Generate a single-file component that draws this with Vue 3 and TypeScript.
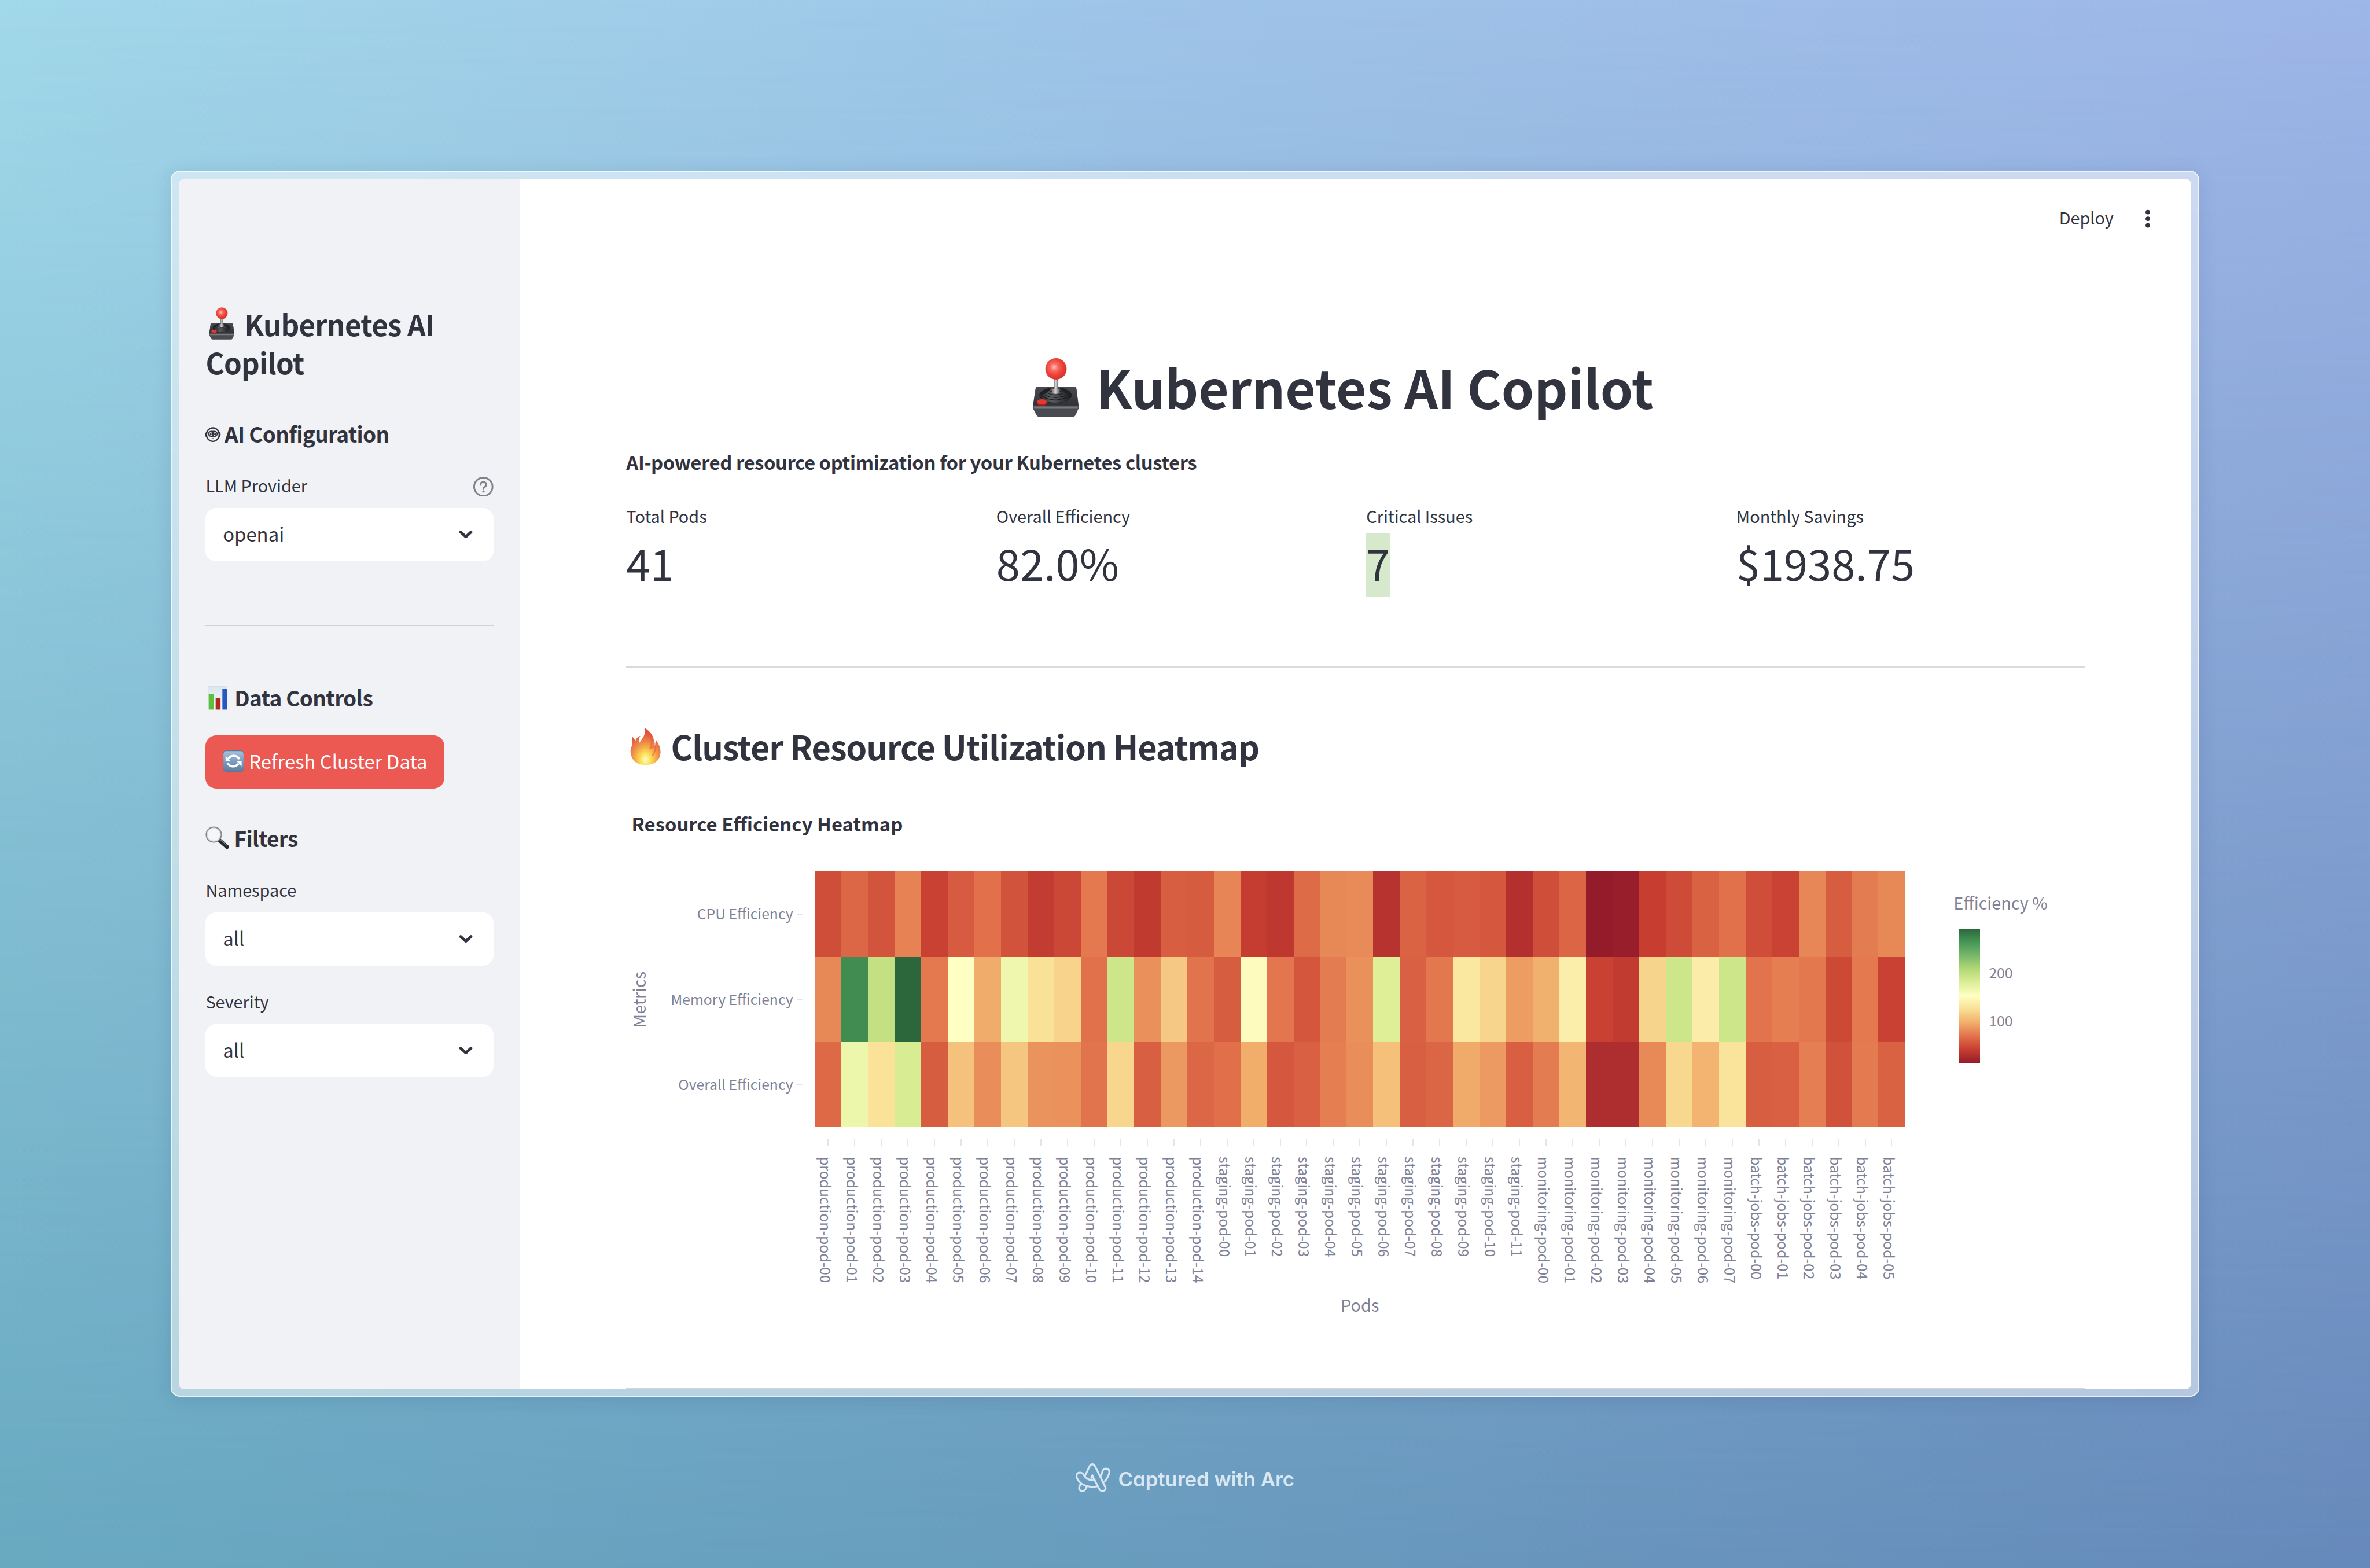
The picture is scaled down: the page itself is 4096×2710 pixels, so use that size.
<script setup lang="ts">
interface Metric {
  label: string
  value: string
  selected?: boolean
}

const metrics: Metric[] = [
  { label: 'Total Pods', value: '41' },
  { label: 'Overall Efficiency', value: '82.0%' },
  { label: 'Critical Issues', value: '7', selected: true },
  { label: 'Monthly Savings', value: '$1938.75' },
]

const filters = [
  { label: 'Namespace', value: 'all' },
  { label: 'Severity', value: 'all' },
]

// Diverging red-yellow-green ramp, eleven evenly spaced stops.
const ramp: number[][] = [
  [148, 28, 42], [199, 62, 49], [226, 115, 76], [241, 175, 108], [249, 223, 149], [254, 255, 194],
  [220, 238, 150], [178, 216, 117], [120, 184, 106], [70, 150, 86], [43, 103, 59],
]

function shade(level: number): string {
  const i = Math.min(Math.floor(level), ramp.length - 2)
  const f = level - i
  const c = ramp[i].map((v, k) => Math.round(v + (ramp[i + 1][k] - v) * f))
  return `rgb(${c.join(',')})`
}

// Efficiency levels per pod, on the ramp's 0-10 scale.
const rows = [
  {
    name: 'CPU Efficiency',
    levels: [
      1.3, 1.77, 1.42, 2.25, 1.05, 1.55, 1.95, 1.4, 0.93, 1.18, 2.1, 1.18, 0.87, 1.6, 1.57, 2.3, 0.97, 0.83, 1.85,
      2.35, 2.4, 0.67, 1.7, 1.47, 1.55, 1.47, 0.6, 1.3, 1.74, 0, 0.06, 1, 1.25, 1.68, 1.97, 1.28, 1.07, 2.32, 1.58,
      2.15, 2.35,
    ],
  },
  {
    name: 'Memory Efficiency',
    levels: [
      2.35, 9.2, 6.6, 10, 2.1, 5, 2.95, 5.45, 4.05, 3.75, 1.97, 6.35, 2.48, 3.55, 2.02, 1.58, 4.88, 2.05, 1.45, 2.15,
      2.48, 5.95, 1.65, 2.08, 4.25, 3.8, 2.7, 3.05, 4.48, 1.05, 0.9, 3.78, 6.38, 4.45, 6.38, 2, 2.2, 2.07, 1.2, 2.1,
      1.05,
    ],
  },
  {
    name: 'Overall Efficiency',
    levels: [
      1.82, 5.5, 4.1, 6.1, 1.58, 3.4, 2.45, 3.48, 2.53, 2.5, 2.02, 3.82, 1.63, 2.63, 1.78, 1.92, 2.98, 1.47, 1.65,
      2.2, 2.45, 3.35, 1.63, 1.75, 2.93, 2.65, 1.63, 2.15, 3.15, 0.5, 0.5, 2.38, 3.85, 3.1, 4.15, 1.6, 1.65, 2.18,
      1.37, 2.13, 1.67,
    ],
  },
]

function series(prefix: string, count: number): string[] {
  return Array.from({ length: count }, (_, i) => `${prefix}-pod-${String(i).padStart(2, '0')}`)
}

const pods = [
  ...series('production', 15),
  ...series('staging', 12),
  ...series('monitoring', 8),
  ...series('batch-jobs', 6),
]
</script>

<template>
  <div class="stage">
    <svg class="defs" aria-hidden="true">
      <defs>
        <radialGradient id="ball" cx=".42" cy=".42" r=".6">
          <stop offset="0" stop-color="#ffc3bb" />
          <stop offset=".3" stop-color="#f76a60" />
          <stop offset=".65" stop-color="#ec3f37" />
          <stop offset="1" stop-color="#d6332d" />
        </radialGradient>
        <linearGradient id="stick">
          <stop offset="0" stop-color="#6a6a6c" />
          <stop offset=".45" stop-color="#d6d6d6" />
          <stop offset="1" stop-color="#5c5c5e" />
        </linearGradient>
        <linearGradient id="boot">
          <stop offset="0" stop-color="#262729" />
          <stop offset=".35" stop-color="#5b5d61" />
          <stop offset="1" stop-color="#1c1d1f" />
        </linearGradient>
        <linearGradient id="deck" x2="0" y2="1">
          <stop offset="0" stop-color="#4a4c51" />
          <stop offset="1" stop-color="#303236" />
        </linearGradient>
        <radialGradient id="flame" cx=".5" cy=".85" r=".8">
          <stop offset="0" stop-color="#fffbd8" />
          <stop offset=".18" stop-color="#fde75e" />
          <stop offset=".38" stop-color="#f8b84a" />
          <stop offset=".6" stop-color="#ec8648" />
          <stop offset=".9" stop-color="#e2503a" />
        </radialGradient>
        <linearGradient id="tile" x2="0" y2="1">
          <stop offset="0" stop-color="#a9c0dc" />
          <stop offset=".5" stop-color="#7e9dc2" />
          <stop offset="1" stop-color="#5d7b9f" />
        </linearGradient>
        <linearGradient id="sheet" x2="0" y2="1">
          <stop offset="0" stop-color="#dbe4ee" />
          <stop offset="1" stop-color="#f6f8fb" />
        </linearGradient>
        <symbol id="joystick" viewBox="0 0 100 127">
          <path d="M13 61H89Q94 61 95 66L100 103V108L93 123Q91 126.500 87 126.500H15Q11 126.500 9 123L1 108V103L7 66Q8 61 13 61Z" fill="#494b50" />
          <path d="M13 61H89Q94 61 95 66L99 102H2L7 66Q8 61 13 61Z" fill="url(#deck)" />
          <path d="M3 104H98V109H4Z" fill="#777a7f" />
          <ellipse cx="50" cy="80" rx="35" ry="17" fill="#202124" />
          <path d="M17 81Q34 76 42 64H59Q66 76 84 81Q80 95 50 96Q21 95 17 81Z" fill="url(#boot)" />
          <g fill="none" stroke="#17181a" stroke-width="1.300">
            <path d="M38 71Q50 77 63 71" />
            <path d="M32 75Q50 84 69 75" />
            <path d="M26 79Q50 91 75 79" />
            <path d="M20 82Q50 98 80 82" />
          </g>
          <rect x="46" y="43" width="10" height="27" fill="url(#stick)" />
          <path d="M42 68Q50 64 59 68V75Q50 79 42 75Z" fill="url(#stick)" />
          <circle cx="51" cy="23" r="23" fill="url(#ball)" />
          <ellipse cx="20.500" cy="97" rx="10.500" ry="6" fill="#a81f1b" />
          <ellipse cx="20.500" cy="94" rx="10.500" ry="5.500" fill="#e53a33" />
        </symbol>
        <symbol id="chevron" viewBox="0 0 30 20">
          <path d="M4 4.500L15 14.500L26 4.500" fill="none" stroke="#31333f" stroke-width="6" stroke-linecap="round" stroke-linejoin="round" />
        </symbol>
      </defs>
    </svg>

    <div class="frame">
      <div class="window">
        <aside class="sidebar">
          <h2 class="brand">
            <svg class="joy-small"><use href="#joystick" /></svg>Kubernetes AI<br />Copilot
          </h2>

          <h3 class="section ai">
            <svg class="robot" viewBox="0 0 70 66">
              <ellipse cx="35" cy="33" rx="28" ry="29.500" fill="none" stroke="#31333f" stroke-width="6" />
              <path d="M7 20Q-5 33 7 46Z M63 20Q75 33 63 46Z" fill="#31333f" />
              <rect x="14" y="16" width="42" height="27" rx="13" fill="#31333f" />
              <path d="M20 33Q20 24 25.500 24Q31 24 31 33M39 33Q39 24 44.500 24Q50 24 50 33M24 36.500H30M40 36.500H46" fill="none" stroke="#f0f2f6" stroke-width="3" />
              <path d="M29 49H41Q35 54 29 49Z" fill="#31333f" />
            </svg>AI Configuration
          </h3>

          <div class="label provider">
            <span>LLM Provider</span>
            <svg class="help" viewBox="0 0 43 43">
              <circle cx="21.500" cy="21.500" r="19.700" fill="none" stroke="#7f818c" stroke-width="3.600" />
              <path d="M15.500 17.500Q15.500 11.500 21.500 11.500Q27.700 11.500 27.700 17Q27.700 20 24 22.200Q21.700 23.600 21.700 26.500" fill="none" stroke="#7f818c" stroke-width="3.600" stroke-linecap="round" />
              <circle cx="21.700" cy="31.500" r="2.400" fill="#7f818c" />
            </svg>
          </div>
          <div class="select">
            <span>openai</span>
            <svg class="chevron"><use href="#chevron" /></svg>
          </div>

          <div class="rule"></div>

          <h3 class="section data">
            <svg class="chart-icon" viewBox="0 0 43 52">
              <rect width="43" height="52" fill="url(#sheet)" />
              <path d="M0 .7H43" stroke="#c5ced8" stroke-width="1.400" />
              <rect x="2" y="18" width="11" height="33.500" fill="#5cbf40" />
              <rect x="17" y="27" width="10.500" height="24.500" fill="#b02a1e" />
              <rect x="31.500" y="7" width="10.500" height="44.500" fill="#2658c0" />
            </svg>Data Controls
          </h3>
          <button class="refresh" type="button">
            <svg class="refresh-icon" viewBox="0 0 46 46">
              <rect x=".7" y=".7" width="44.600" height="44.600" rx="7" fill="url(#tile)" stroke="#5c7898" stroke-width="1.400" />
              <path d="M12 17.500Q18 10 27 12Q33 13.500 35.500 19M34 28.500Q28 36 19 34Q13 32.500 10.500 27" fill="none" stroke="#fff" stroke-width="4.600" />
              <path d="M6 11.500V23.500H17.500Z M40.500 34.500V22.500H29Z" fill="#fff" />
            </svg>Refresh Cluster Data
          </button>

          <h3 class="section find">
            <svg class="lens" viewBox="0 0 51 50">
              <path d="M31 31L46.500 44.500" stroke="#25272a" stroke-width="8.500" stroke-linecap="round" />
              <path d="M32 29L46 41" stroke="#7d8083" stroke-width="1.600" stroke-linecap="round" />
              <circle cx="18" cy="18" r="16.200" fill="#f4f6f8" stroke="#858a90" stroke-width="2.600" />
              <circle cx="18" cy="18" r="13.800" fill="none" stroke="#d8dde2" stroke-width="1.400" />
            </svg>Filters
          </h3>
          <template v-for="(f, i) in filters" :key="f.label">
            <div class="label" :class="i ? 'next' : 'first'">{{ f.label }}</div>
            <div class="select">
              <span>{{ f.value }}</span>
              <svg class="chevron"><use href="#chevron" /></svg>
            </div>
          </template>
        </aside>

        <main class="main">
          <header class="toolbar">
            <span class="deploy">Deploy</span>
            <svg class="dots" viewBox="0 0 10 40">
              <circle cx="5" cy="5.700" r="4.900" /><circle cx="5" cy="20" r="4.900" /><circle cx="5" cy="34.300" r="4.900" />
            </svg>
          </header>

          <div class="content">
            <h1 class="title"><svg class="joy-big"><use href="#joystick" /></svg>Kubernetes AI Copilot</h1>
            <p class="lead">AI-powered resource optimization for your Kubernetes clusters</p>

            <div class="metrics">
              <div v-for="m in metrics" :key="m.label" class="metric">
                <div class="label">{{ m.label }}</div>
                <div class="value"><span :class="{ marked: m.selected }">{{ m.value }}</span></div>
              </div>
            </div>

            <div class="rule wide"></div>

            <h2 class="heading">
              <svg class="fire" viewBox="0 0 66 80">
                <path d="M31 0Q45 8 50 22Q53 31 51 41Q56 38 56 27Q67 42 65 56Q62 78 34 80Q4 79 1 53Q0 44 5 37Q2 27 5 20Q9 22 11 29Q13 20 22 17Q16 26 20 32Q24 27 28 20Q34 11 31 0Z" fill="url(#flame)" />
                <path d="M31 2Q45 12 46 26Q47 36 43 44Q50 42 53 35Q57 50 47 60" fill="none" stroke="#e4573d" stroke-width="3" opacity=".55" />
              </svg>Cluster Resource Utilization Heatmap
            </h2>

            <div class="chart-title">Resource Efficiency Heatmap</div>
            <div class="chart">
              <div class="y-title"><span>Metrics</span></div>
              <div class="y-axis">
                <div v-for="r in rows" :key="r.name" class="y-label">{{ r.name }}<i></i></div>
              </div>
              <div class="plot">
                <div v-for="r in rows" :key="r.name" class="map-row">
                  <div v-for="(l, i) in r.levels" :key="i" class="cell" :style="{ backgroundColor: shade(l) }"></div>
                </div>
                <div class="x-axis">
                  <div v-for="p in pods" :key="p" class="x-label"><i></i><span>{{ p }}</span></div>
                </div>
                <div class="x-title">Pods</div>
              </div>
              <div class="legend">
                <div class="legend-title">Efficiency %</div>
                <div class="legend-body">
                  <div class="scale"></div>
                  <div class="scale-ticks"><span>200</span><span>100</span></div>
                </div>
              </div>
            </div>
            <div class="rule last"></div>
          </div>
        </main>
      </div>
    </div>

    <footer class="credit">
      <svg class="arc" viewBox="83 98 216 185" preserveAspectRatio="none">
        <g fill="none" stroke="#d9e7f2" stroke-width="11.500" stroke-linejoin="round">
          <path d="M141 180L170 117Q176 104 187 104Q198 104 204 117L268 251Q273 266 263 273Q251 280 239 274Q233 271 230 264L196 196L187 175L178 197" />
          <path d="M203 206Q190 210 172 205Q149 198 135 176Q126 159 112 158Q98 157 91 168Q87 177 90 191Q101 218 126 234Q152 249 187 250Q204 250 222 245" />
          <path d="M238 182Q247 166 251 148Q257 132 272 132Q294 133 293 156Q290 184 260 220" />
          <path d="M114 231L105 254Q103 270 117 276Q137 280 145 264L153 247" />
        </g>
      </svg>
      <span>Captured with Arc</span>
    </footer>
  </div>
</template>

<style>
/* The canvas is 50.88rem wide, so every length follows the viewport. */
html {
  font-size: calc(100vw / 50.88);
  overflow: hidden;
}
body {
  margin: 0;
}
</style>

<style scoped>
* {
  box-sizing: border-box;
}
h1,
h2,
h3,
p {
  margin: 0;
  font-weight: 600;
}
svg {
  display: block;
  flex: none;
}
.defs {
  position: absolute;
  width: 0;
  height: 0;
}
.stage {
  position: relative;
  width: 100vw;
  height: 100vh;
  padding-top: 3.67rem;
  display: flex;
  flex-direction: column;
  align-items: center;
  overflow: hidden;
  background: linear-gradient(90deg, #a2d8ea, #9fc4e8 50%, #9eb6e8);
  color: #31333f;
  font-family: 'Noto Sans CJK SC', 'Noto Sans', sans-serif;
}
.stage::before {
  content: '';
  position: absolute;
  inset: 0;
  background: linear-gradient(90deg, #68a9c0, #6899bd 55%, #6689ba);
  -webkit-mask-image: linear-gradient(#0000, #000);
  mask-image: linear-gradient(#0000, #000);
}
.frame {
  position: relative;
  flex: none;
  width: 43.54rem;
  height: 26.32rem;
  padding: 0.145rem;
  border: 0.025rem solid rgba(255, 255, 255, 0.85);
  border-radius: 0.2rem;
  background: rgba(255, 255, 255, 0.5);
  background-clip: padding-box;
  box-shadow: 0 0.06rem 0.4rem rgba(30, 50, 110, 0.13);
}
.window {
  height: 100%;
  display: flex;
  overflow: hidden;
  border-radius: 0.12rem;
  background: #fff;
}
.sidebar {
  flex: none;
  width: 7.32rem;
  padding: 2.705rem 0.57rem 0 0.575rem;
  background: #f0f2f6;
}
.brand {
  font-size: 0.613rem;
  line-height: 0.818rem;
  letter-spacing: -0.01rem;
  white-space: nowrap;
}
.joy-small {
  display: inline-block;
  width: 0.545rem;
  height: 0.7rem;
  margin: 0 0.22rem 0 0.07rem;
  vertical-align: -0.08rem;
}
.section {
  display: flex;
  align-items: center;
  height: 0.61rem;
  font-size: 0.46rem;
  line-height: 0.61rem;
  letter-spacing: -0.009rem;
  white-space: nowrap;
}
.ai {
  margin-top: 0.824rem;
}
.robot {
  width: 0.345rem;
  height: 0.327rem;
  margin: 0.05rem 0.075rem 0 -0.015rem;
}
.label {
  height: 0.4rem;
  font-size: 0.358rem;
  line-height: 0.4rem;
  white-space: nowrap;
}
.provider {
  display: flex;
  justify-content: space-between;
  margin-top: 0.605rem;
}
.help {
  width: 0.43rem;
  height: 0.43rem;
  margin-top: 0.01rem;
}
.select {
  display: flex;
  align-items: center;
  justify-content: space-between;
  height: 1.137rem;
  margin-top: 0.287rem;
  padding: 0 0.445rem 0 0.37rem;
  border-radius: 0.23rem;
  background: #fff;
  font-size: 0.408rem;
}
.select span {
  margin-top: -0.055rem;
}
.chevron {
  width: 0.3rem;
  height: 0.2rem;
}
.rule {
  height: 0.03rem;
  margin-top: 1.372rem;
  background: #cfd1d6;
}
.data {
  margin-top: 1.226rem;
}
.chart-icon {
  width: 0.43rem;
  height: 0.52rem;
  margin: 0 0.15rem 0 0.04rem;
}
.refresh {
  display: flex;
  align-items: center;
  width: 5.13rem;
  height: 1.14rem;
  margin: 0.505rem 0 0;
  padding: 0 0 0.06rem 0.37rem;
  border: 0;
  border-radius: 0.23rem;
  background: #ec5953;
  color: #fff;
  font: 400 0.408rem 'Noto Sans CJK SC', 'Noto Sans', sans-serif;
  white-space: nowrap;
}
.refresh-icon {
  width: 0.46rem;
  height: 0.46rem;
  margin: 0.03rem 0.1rem 0 0;
}
.find {
  margin-top: 0.764rem;
}
.lens {
  width: 0.51rem;
  height: 0.5rem;
  margin: 0 0.1rem 0 0;
}
.first {
  margin-top: 0.605rem;
}
.next {
  margin-top: 0.57rem;
}
.main {
  flex: 1;
  display: flex;
  flex-direction: column;
  min-width: 0;
}
.toolbar {
  flex: none;
  display: flex;
  align-items: center;
  justify-content: flex-end;
  height: 1.71rem;
  padding-right: 0.875rem;
}
.deploy {
  margin: -0.05rem 0.69rem 0 0;
  font-size: 0.358rem;
}
.dots {
  width: 0.1rem;
  height: 0.4rem;
  fill: #31333f;
}
.content {
  flex: 1;
  display: flex;
  flex-direction: column;
  width: 31.32rem;
  margin-left: 2.285rem;
}
.title {
  display: flex;
  align-items: center;
  height: 1.5rem;
  margin: 1.997rem 0 0 8.71rem;
  font-size: 1.124rem;
  font-weight: 700;
  line-height: 1.5rem;
  white-space: nowrap;
}
.joy-big {
  width: 1rem;
  height: 1.265rem;
  margin: 0.04rem 0.38rem 0 0;
}
.lead {
  margin-top: 0.574rem;
  height: 0.6rem;
  font-size: 0.408rem;
  line-height: 0.6rem;
  letter-spacing: -0.0052rem;
}
.metrics {
  display: grid;
  grid-template-columns: repeat(4, 1fr);
  column-gap: 0.455rem;
  margin-top: 0.664rem;
}
.value {
  margin-top: 0.175rem;
  height: 1.35rem;
  font-size: 0.92rem;
  line-height: 1.23rem;
}
.value span {
  display: block;
  width: max-content;
  height: 1.35rem;
}
.marked {
  background: #d6e9cc;
}
.wide {
  flex: none;
  margin-top: 1.49rem;
  background: #d9dadd;
}
.heading {
  display: flex;
  align-items: center;
  height: 0.9rem;
  margin-top: 1.235rem;
  font-size: 0.716rem;
  line-height: 0.9rem;
  letter-spacing: -0.0143rem;
  white-space: nowrap;
}
.fire {
  width: 0.66rem;
  height: 0.8rem;
  margin: 0.03rem 0.22rem 0 0.08rem;
}
.chart-title {
  height: 0.6rem;
  margin: 0.915rem 0 0 0.115rem;
  font-size: 0.408rem;
  font-weight: 700;
  line-height: 0.6rem;
}
.chart {
  display: flex;
  margin-top: 0.735rem;
  color: #7f8296;
}
.y-title {
  flex: none;
  width: 0.55rem;
  height: 5.486rem;
  display: flex;
  align-items: center;
  justify-content: center;
  font-size: 0.358rem;
}
.y-title span {
  writing-mode: vertical-rl;
  transform: rotate(180deg);
  line-height: 0.4rem;
}
.y-axis {
  flex: none;
  width: 3.5rem;
  height: 5.486rem;
  display: flex;
  flex-direction: column;
  padding-right: 0.265rem;
}
.y-label {
  flex: 1;
  display: flex;
  align-items: center;
  justify-content: flex-end;
  padding-bottom: 0.04rem;
  font-size: 0.307rem;
  white-space: nowrap;
}
.y-label i {
  width: 0.13rem;
  height: 0.025rem;
  margin: 0.04rem 0 0 0.075rem;
  background: #e3e5ee;
}
.plot {
  flex: none;
  width: 23.4rem;
}
.map-row,
.x-axis {
  display: flex;
}
.map-row {
  height: 1.8287rem;
}
.cell {
  flex: 1;
}
.x-axis {
  height: 3.35rem;
  padding-top: 0.26rem;
}
.x-label {
  flex: 1;
  display: flex;
  flex-direction: column;
  align-items: center;
  width: 0;
  font-size: 0.307rem;
}
.x-label i {
  flex: none;
  width: 0.025rem;
  height: 0.14rem;
  background: #e3e5ee;
}
.x-label span {
  margin: 0.23rem 0.08rem 0 0;
  line-height: 0.4rem;
  writing-mode: vertical-rl;
  white-space: nowrap;
}
.x-title {
  margin-top: 0.264rem;
  height: 0.4rem;
  font-size: 0.358rem;
  line-height: 0.4rem;
  text-align: center;
}
.legend {
  padding: 0.47rem 0 0 1.045rem;
}
.legend-title {
  height: 0.4rem;
  font-size: 0.358rem;
  line-height: 0.4rem;
  white-space: nowrap;
}
.legend-body {
  display: flex;
  margin: 0.355rem 0 0 0.105rem;
}
.scale {
  width: 0.46rem;
  height: 2.887rem;
  background: linear-gradient(
    #2b673b,
    #469656,
    #78b86a,
    #b2d875,
    #dcee96,
    #feffc2,
    #f9df95,
    #f1af6c,
    #e2734c,
    #c73e31,
    #941c2a
  );
}
.scale-ticks {
  display: flex;
  flex-direction: column;
  margin-left: 0.195rem;
  padding-top: 0.73rem;
  font-size: 0.307rem;
  line-height: 0.4rem;
}
.scale-ticks span + span {
  margin-top: 0.63rem;
}
.last {
  flex: none;
  height: 0.02rem;
  margin-top: auto;
  background: #d5d6d9;
}
.credit {
  position: relative;
  display: flex;
  align-items: center;
  height: 0.62rem;
  margin-top: 1.42rem;
  color: #d9e7f2;
  font-family: Inter, 'Liberation Sans', sans-serif;
  font-size: 0.43rem;
  font-weight: 600;
  font-feature-settings: 'cv11';
  white-space: nowrap;
}
.arc {
  width: 0.744rem;
  height: 0.616rem;
  margin-right: 0.17rem;
}
.credit span {
  margin-top: 0.06rem;
}
</style>
